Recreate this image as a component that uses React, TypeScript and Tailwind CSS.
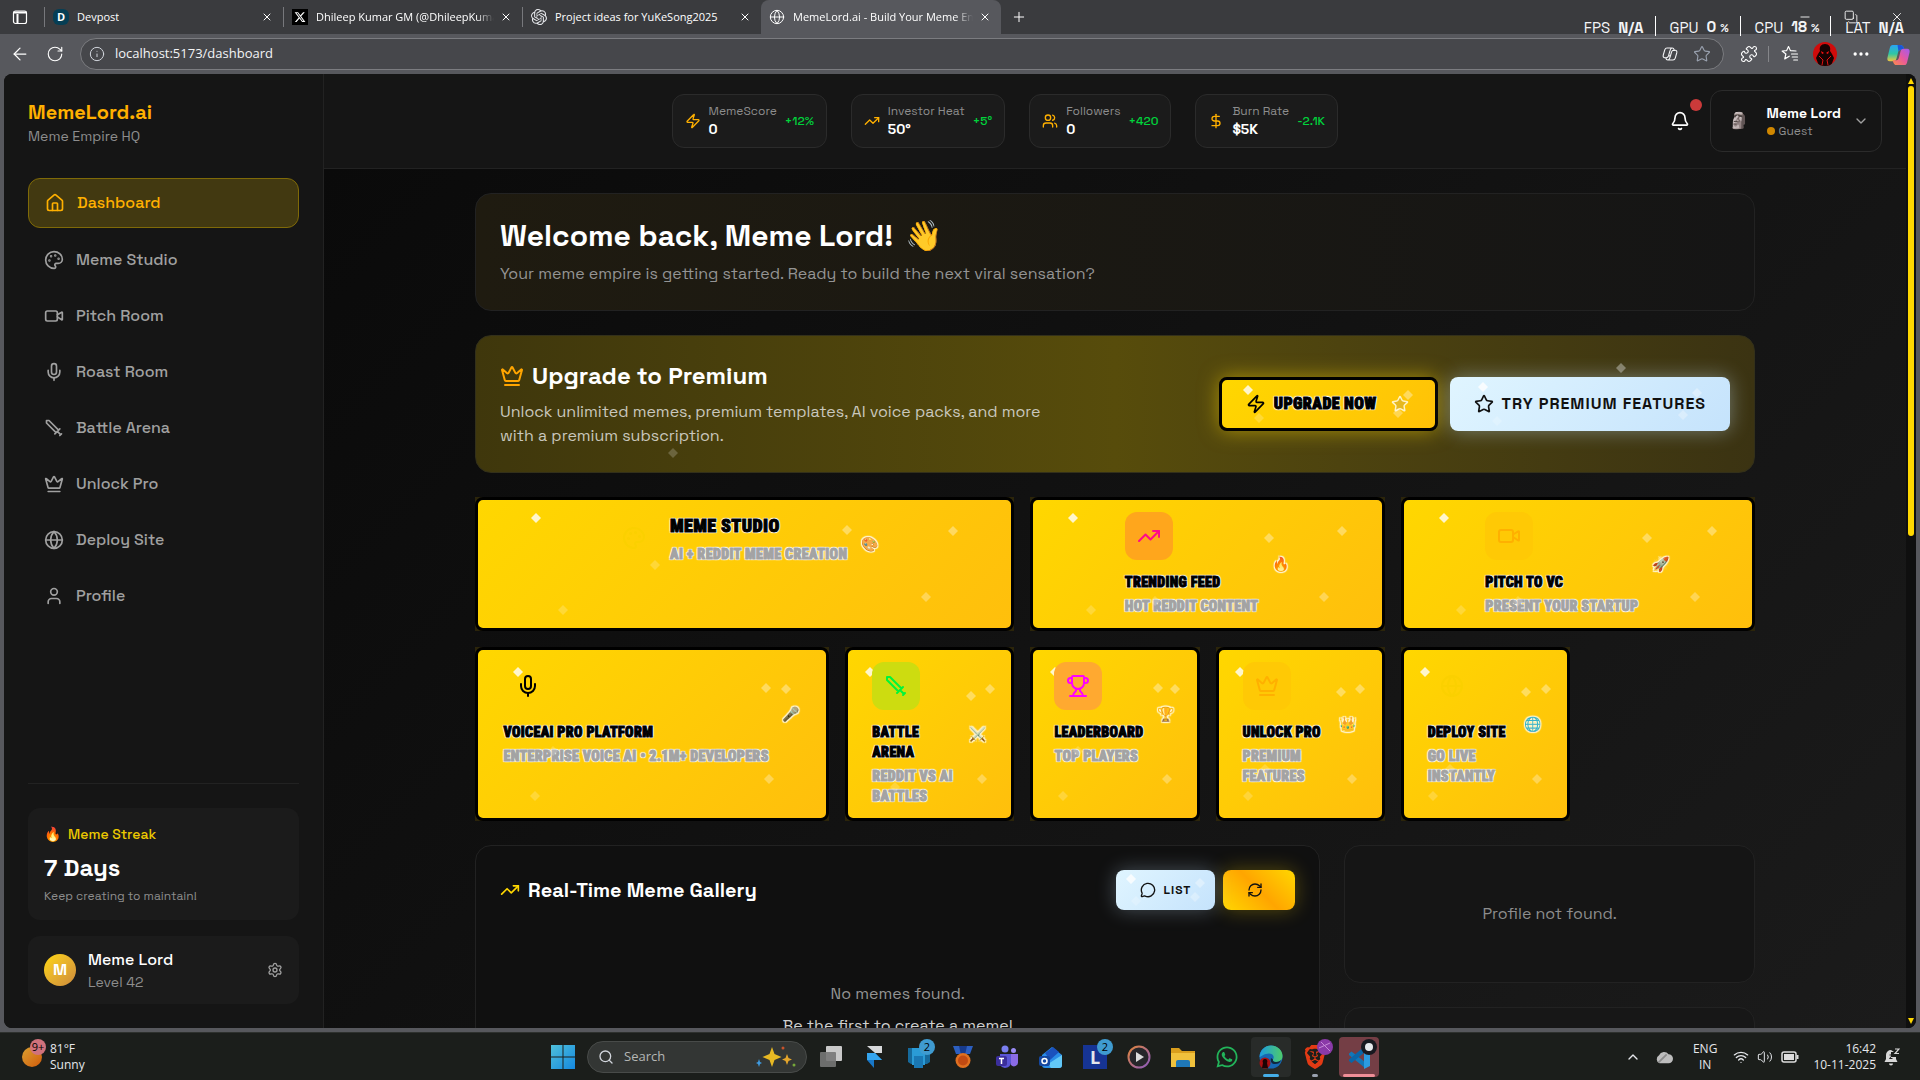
import React from "react";
import {
  House, Palette, Video, Mic, Crown, Globe, User, Zap, TrendingUp, Users, DollarSign, Bell,
  ChevronDown, ChevronUp, Settings, Star, MessageCircle, RefreshCw, Trophy, X, Plus, ArrowLeft,
  RotateCw, Info, Puzzle, Ellipsis, Search, Wifi, Volume2, Minus, Copy,
} from "lucide-react";
import { SiBrave, SiOpenai } from "react-icons/si";
import { FaWhatsapp, FaXTwitter } from "react-icons/fa6";

type IconProps = { className?: string; strokeWidth?: number };
type IconType = React.ComponentType<IconProps>;

const Sword = ({ className, strokeWidth = 2 }: IconProps) => (
  <svg viewBox="0 0 24 24" fill="none" stroke="currentColor" strokeWidth={strokeWidth} strokeLinecap="round" strokeLinejoin="round" className={className}>
    <path d="M14.5 17.5 3 6V3h3l11.5 11.5M13 19l6-6M16 16l4 4M19 21l2-2" />
  </svg>
);

const meme = "font-['Roboto_Condensed',sans-serif] font-black uppercase [-webkit-text-stroke:1px_currentColor]";
const outline = "[text-shadow:-1px_-1px_1px_#fff,1px_-1px_1px_#fff,-1px_1px_1px_#fff,1px_1px_1px_#fff,0_0_2px_#fff]";

/* ---------- Browser chrome ---------- */

const tabs = [
  { title: "Devpost", active: false },
  { title: "Dhileep Kumar GM (@DhileepKumar)", active: false },
  { title: "Project ideas for YuKeSong2025", active: false },
  { title: "MemeLord.ai - Build Your Meme Empire", active: true },
];

function TabIcon({ index }: { index: number }) {
  if (index === 0)
    return (
      <span className="flex size-4 shrink-0 items-center justify-center rounded-md bg-[#063e54] text-[11px] font-bold text-white">D</span>
    );
  if (index === 1)
    return (
      <span className="flex size-4 shrink-0 items-center justify-center bg-black text-white"><FaXTwitter className="size-3" /></span>
    );
  if (index === 2) return <SiOpenai className="size-4 shrink-0 text-gray-200" />;
  return <Globe className="size-4 shrink-0 text-white" strokeWidth={1.5} />;
}

function TabBar() {
  return (
    <div className="flex h-[34px] items-stretch bg-[#3a3b3e] text-[11px] text-white">
      <button aria-label="Tab actions" className="flex w-[44px] items-center pl-3">
        <svg viewBox="0 0 16 16" className="size-4" fill="none" stroke="#fff" strokeWidth="1.2">
          <rect x="1.5" y="2" width="13" height="12.5" rx="2" />
          <path d="M1.5 3.5h13M5.5 5v9" strokeWidth="2" />
        </svg>
      </button>
      {tabs.map((t, i) => (
        <div
          key={t.title}
          className={
            t.active
              ? "flex w-[240px] items-center rounded-t-lg bg-[#57585d] px-2"
              : "my-[7px] flex w-[239px] items-center border-l border-[#77787c] px-2"
          }
        >
          <button className="flex min-w-0 flex-1 items-center gap-2">
            <TabIcon index={i} />
            <span
              className={
                i % 2 === 1
                  ? "overflow-hidden whitespace-nowrap [mask-image:linear-gradient(to_right,#000_90%,transparent)]"
                  : "overflow-hidden whitespace-nowrap"
              }
            >
              {t.title}
            </span>
          </button>
          <button aria-label={`Close ${t.title}`} className="ml-1 shrink-0">
            <X className="size-4 p-0.5" strokeWidth={2} />
          </button>
        </div>
      ))}
      <button aria-label="New tab" className="ml-2 self-center"><Plus className="size-5 p-0.5" strokeWidth={1.5} /></button>
    </div>
  );
}

function Overlay() {
  const stats = [
    ["FPS", "N/A", ""],
    ["GPU", "0", "%"],
    ["CPU", "18", "%"],
    ["LAT", "N/A", ""],
  ];
  return (
    <>
      <div className="absolute top-[10px] right-4 flex items-center gap-8 text-white">
        <button aria-label="Minimize"><Minus className="size-3.5" strokeWidth={1.5} /></button>
        <button aria-label="Restore"><Copy className="size-3.5 -scale-x-100 rotate-90" strokeWidth={1.5} /></button>
        <button aria-label="Close window"><X className="size-3.5" strokeWidth={1.5} /></button>
      </div>
      <div className="absolute top-4 right-4 flex h-5 items-end font-['Space_Grotesk',Inter,sans-serif] text-[15px] leading-4 text-gray-100">
        {stats.map(([k, v, u]) => (
          <div key={k} className="flex h-5 items-end gap-2 border-l border-white pr-[11px] pl-3.5 first:border-l-0 last:pr-0">
            <span>{k}</span>
            <span className="font-bold">
              {v}
              {u && <span className="pl-1 text-[11px]">{u}</span>}
            </span>
          </div>
        ))}
      </div>
    </>
  );
}

function CopilotLogo({ className }: { className?: string }) {
  return (
    <svg viewBox="0 0 24 24" className={className}>
      <defs>
        <linearGradient id="cpa" x1="0" y1="0" x2="0" y2="1">
          <stop offset="0" stopColor="#2aa4f4" /><stop offset=".55" stopColor="#2fc6a4" /><stop offset="1" stopColor="#f2c53d" />
        </linearGradient>
        <linearGradient id="cpb" x1="1" y1="0" x2="0" y2="1">
          <stop offset="0" stopColor="#a35bf0" /><stop offset=".5" stopColor="#e8589e" /><stop offset="1" stopColor="#fb8a4a" />
        </linearGradient>
      </defs>
      <path d="M6 2h8c2 0 3 1.5 3.5 3L18 7h-3c-2 0-3 1-3.5 3l-1.5 6c-.5 2-1.5 3-3.5 3H3c-2.5 0-3-2-2.5-4L3 5c.5-2 1.5-3 3-3z" fill="url(#cpa)" />
      <path d="M11 2h3c2 0 3 1.5 3.5 3L18 7h-3c-1.5 0-2.5.5-3 2z" fill="#1d55d8" />
      <path d="M18 23h-8c-2 0-3-1.5-3.5-3L6 18h3c2 0 3-1 3.500-3L14 9c.5-2 1.5-3 3.5-3H21c2.5 0 3 2 2.5 4L21 20c-.5 2-1.5 3-3 3z" fill="url(#cpb)" />
    </svg>
  );
}

function Toolbar() {
  return (
    <div className="flex h-10 items-center bg-[#57585d] pr-2.5 text-white">
      <button aria-label="Back" className="ml-2.5"><ArrowLeft className="size-5" strokeWidth={1.5} /></button>
      <button aria-label="Reload" className="ml-4"><RotateCw className="size-[18px]" strokeWidth={1.5} /></button>
      <div className="ml-4 flex h-8 flex-1 items-center rounded-full border border-[#7b7c80] bg-[#46474b] px-2">
        <Info className="size-4 text-gray-300" strokeWidth={1.5} />
        <input aria-label="Address" defaultValue="localhost:5173/dashboard" className="ml-2.5 flex-1 bg-transparent text-[13px] text-gray-100 outline-none" />
        <svg viewBox="0 0 24 24" className="size-[18px] text-gray-100" fill="none" stroke="currentColor" strokeWidth="1.5" strokeLinejoin="round">
          <path d="M8 4h7c1.5 0 2.2 1 2.5 2.5l.3 1.5M8 4C6.5 4 5.5 5 5 6.5l-2 7c-.5 2 .3 3.5 2 3.5h2c1.5 0 2.5-1 3-2.5l2-7C12.5 5.5 13.5 4 15 4M16 20H9c-1.5 0-2.2-1-2.5-2.5L6.3 17M16 20c1.5 0 2.5-1 3-2.5l2-7c.5-2-.3-3.5-2-3.5h-2c-1.5 0-2.5 1-3 2.5l-2 7c-.5 2-1.5 3.5-3 3.5M10 14.5h3" />
        </svg>
        <button aria-label="Favorite" className="mr-1 ml-3.5"><Star className="size-[18px] text-gray-400" strokeWidth={1.5} /></button>
      </div>
      <button aria-label="Extensions" className="ml-4"><Puzzle className="size-[18px]" strokeWidth={1.5} /></button>
      <span className="ml-2.5 h-4 w-px bg-[#85868a]" />
      <button aria-label="Favorites" className="ml-3">
        <svg viewBox="0 0 24 24" className="size-[18px]" fill="none" stroke="currentColor" strokeWidth="1.6" strokeLinejoin="round" strokeLinecap="round">
          <path d="M11 15 5 18.500 6.500 12 1.500 8l6-.5L10 2l2.500 5.500L20 8M14 12h8M15 16h7M17 20h5" />
        </svg>
      </button>
      <button aria-label="Profile" className="ml-3.5 flex size-6 items-center justify-center overflow-hidden rounded-full bg-[#d00b0b]">
        <svg viewBox="0 0 24 24" className="size-6">
          <path d="M12 2c4 0 6 3 5 7l2 3 2 4-3 8H6l-3-8 2-4 2-3c-1-4 1-7 5-7z" fill="#160202" />
          <path d="m8 9 3 2-2 1zM16 9l-3 2 2 1z" fill="#f11" />
          <path d="M6 14l4 4-1 5M18 14l-4 4 1 5" fill="none" stroke="#d11" />
        </svg>
      </button>
      <button aria-label="More" className="ml-3.5"><Ellipsis className="size-5" strokeWidth={2} /></button>
      <button aria-label="Copilot" className="ml-4"><CopilotLogo className="size-[23px]" /></button>
    </div>
  );
}

/* ---------- Sidebar ---------- */

const nav: { label: string; icon: IconType }[] = [
  { label: "Dashboard", icon: House },
  { label: "Meme Studio", icon: Palette },
  { label: "Pitch Room", icon: Video },
  { label: "Roast Room", icon: Mic },
  { label: "Battle Arena", icon: Sword },
  { label: "Unlock Pro", icon: Crown },
  { label: "Deploy Site", icon: Globe },
  { label: "Profile", icon: User },
];

function Sidebar() {
  return (
    <aside className="flex w-80 shrink-0 flex-col border-r border-[#222] bg-[#151515] p-6">
      <div className="mb-8">
        <div className="text-xl leading-7 font-bold text-[#ffb000]">MemeLord.ai</div>
        <div className="text-sm text-[#8d8d8d]">Meme Empire HQ</div>
      </div>
      <nav className="flex flex-1 flex-col gap-2">
        {nav.map(({ label, icon: Icon }, i) => (
          <a
            key={label}
            href="#"
            className={
              i === 0
                ? "flex items-center gap-3 rounded-xl border border-[#7f6a08] bg-[#423911] px-4 py-3 font-medium text-[#ffb000]"
                : "flex items-center gap-3 rounded-xl px-4 py-3 font-medium text-[#a0a0a0]"
            }
          >
            <Icon className="size-5" strokeWidth={2} />
            {label}
          </a>
        ))}
      </nav>
      <div className="flex flex-col gap-4 border-t border-[#222] pt-6">
        <div className="rounded-xl bg-[#1b1b1b] p-4">
          <div className="mb-2 flex items-center gap-2 text-sm font-medium text-[#ecc900]">
            <span className="w-4 text-sm">🔥</span>
            Meme Streak
          </div>
          <div className="mb-1 text-2xl font-bold text-white">7 Days</div>
          <div className="text-xs text-[#8d8d8d]">Keep creating to maintain!</div>
        </div>
        <div className="flex items-center gap-3 rounded-xl bg-[#1b1b1b] px-4 py-3">
          <div className="flex size-8 items-center justify-center rounded-full bg-linear-to-br from-[#ffd700] to-[#cd8a3a] font-bold text-white">M</div>
          <div className="flex-1">
            <div className="font-medium text-white">Meme Lord</div>
            <div className="text-sm text-[#8d8d8d]">Level 42</div>
          </div>
          <button aria-label="Settings"><Settings className="size-4 text-[#a0a0a0]" strokeWidth={2} /></button>
        </div>
      </div>
    </aside>
  );
}

/* ---------- Header ---------- */

const stats: { label: string; value: string; delta: string; icon: IconType }[] = [
  { label: "MemeScore", value: "0", delta: "+12%", icon: Zap },
  { label: "Investor Heat", value: "50°", delta: "+5°", icon: TrendingUp },
  { label: "Followers", value: "0", delta: "+420", icon: Users },
  { label: "Burn Rate", value: "$5K", delta: "-2.1K", icon: DollarSign },
];

function Header() {
  return (
    <header className="flex items-center border-b border-[#222] bg-[#151515] px-6 py-4">
      <div className="flex flex-1 justify-center gap-6">
        {stats.map(({ label, value, delta, icon: Icon }) => (
          <div key={label} className="flex items-center gap-2 rounded-xl border border-[#2b2b2b] bg-[#1b1b1b] px-3 py-2">
            <Icon className="size-4 text-[#ffb000]" strokeWidth={2} />
            <div>
              <div className="text-xs text-[#8d8d8d]">{label}</div>
              <div className="text-sm font-bold text-white">{value}</div>
            </div>
            <span className="text-xs font-medium text-[#00d43b]">{delta}</span>
          </div>
        ))}
      </div>
      <div className="flex items-center gap-3">
        <button aria-label="Notifications" className="relative p-2 text-white">
          <Bell className="size-5" strokeWidth={2} />
          <span className="absolute -top-1 -right-1 size-3 rounded-full bg-[#cb3a3a]" />
        </button>
        <button className="flex items-center rounded-xl border border-[#2b2b2b] px-3 py-3 text-left">
          <span className="flex size-8 items-center justify-center text-base">🗿</span>
          <span className="ml-3 block">
            <span className="block text-sm font-bold text-white">Meme Lord</span>
            <span className="flex items-center gap-1 text-xs text-[#8d8d8d]">
              <span className="size-2 rounded-full bg-[#d08700]" />
              Guest
            </span>
          </span>
          <ChevronDown className="ml-3 size-4 text-[#a0a0a0]" strokeWidth={2} />
        </button>
      </div>
    </header>
  );
}

/* ---------- Sparkles ---------- */

function Spark({ className }: { className: string }) {
  return (
    <svg viewBox="0 0 10 10" className={className} aria-hidden="true">
      <path d="M5 0 10 5 5 10 0 5z" fill="#fff" />
    </svg>
  );
}

function SparklePair() {
  return (
    <>
      <Spark className="pointer-events-none absolute top-[20%] right-[10%] size-2.5 opacity-35" />
      <Spark className="pointer-events-none absolute bottom-[10%] left-[15%] size-2.5 opacity-20" />
    </>
  );
}

function Sparkles() {
  return (
    <>
      <Spark className="pointer-events-none absolute top-[10%] left-[10%] size-2.5 opacity-80" />
      <Spark className="pointer-events-none absolute right-[15%] bottom-[20%] size-2.5 opacity-30" />
      <SparklePair />
    </>
  );
}

/* ---------- Action cards ---------- */

type Card = { title: string; sub: string; emoji: string; icon: IconType; span: string; tint: string };

const cards: Card[] = [
  { title: "Trending Feed", sub: "Hot Reddit Content", emoji: "🔥", icon: TrendingUp, span: "col-span-2", tint: "bg-[#ffa61c] text-[#ff0a8a]" },
  { title: "Pitch to VC", sub: "Present your startup", emoji: "🚀", icon: Video, span: "col-span-2", tint: "bg-[#ffc905] text-[#ffb000]" },
  { title: "VoiceAI Pro Platform", sub: "Enterprise Voice AI • 2.1M+ Developers", emoji: "🎤", icon: Mic, span: "col-span-2", tint: "text-black" },
  { title: "Battle Arena", sub: "Reddit vs AI Battles", emoji: "⚔️", icon: Sword, span: "col-span-1", tint: "bg-[#cddc10] text-[#00f53a]" },
  { title: "Leaderboard", sub: "Top Players", emoji: "🏆", icon: Trophy, span: "col-span-1", tint: "bg-[#ffa930] text-[#ff00ff]" },
  { title: "Unlock Pro", sub: "Premium Features", emoji: "👑", icon: Crown, span: "col-span-1", tint: "bg-[#ffc905] text-[#ffb000]" },
  { title: "Deploy Site", sub: "Go Live Instantly", emoji: "🌐", icon: Globe, span: "col-span-1", tint: "text-[#fbd000]" },
];

const shell =
  "relative flex w-full items-start justify-center rounded-lg border-3 border-black bg-linear-135 from-[#ffd700] to-[#ffbf0c] px-6 py-3 text-left";

function Emoji({ children }: { children: string }) {
  return <span className={`w-5 shrink-0 text-center text-sm opacity-80 ${outline}`}>{children}</span>;
}

function ActionCards() {
  return (
    <section className="grid grid-cols-7 gap-4">
      <div className="col-span-3 flex bg-[#2c250a]">
        <button className={shell}>
          <Sparkles />
          <span className="relative flex h-16 items-center gap-3">
            <SparklePair />
            <span className="mb-3 flex items-center gap-3">
              <span className="flex size-12 items-center justify-center text-[#fbd000]"><Palette className="size-6" strokeWidth={2} /></span>
              <span className={`${meme} ${outline} tracking-wide`}>
                <span className="block text-lg leading-7 text-black">Meme Studio</span>
                <span className="mt-1 block text-sm leading-5 text-[#a3a3a3]">AI + Reddit meme creation</span>
              </span>
            </span>
            <Emoji>🎨</Emoji>
          </span>
        </button>
      </div>
      {cards.map(({ title, sub, emoji, icon: Icon, span, tint }) => (
        <div key={title} className={`${span} flex bg-[#2c250a]`}>
          <button className={shell}>
            <Sparkles />
            <span className="relative flex items-center gap-3">
              <SparklePair />
              <span>
                <span className={`flex size-12 items-center justify-center rounded-xl ${tint}`}><Icon className="size-6" strokeWidth={2} /></span>
                <span className={`${meme} ${outline} block text-sm tracking-wide`}>
                  <span className="mt-3 block text-black">{title}</span>
                  <span className="mt-1 block text-[#a3a3a3]">{sub}</span>
                </span>
              </span>
              <Emoji>{emoji}</Emoji>
            </span>
          </button>
        </div>
      ))}
    </section>
  );
}

/* ---------- Main ---------- */

function Main() {
  return (
    <main className="min-h-0 flex-1 overflow-hidden bg-linear-135 from-[#0a0a0a] to-[#1b1b1b] p-6">
      <div className="mx-auto flex max-w-7xl flex-col gap-6">
        <section className="rounded-2xl border border-[#222] bg-linear-to-r from-[#1f1b10] to-[#151515] p-6">
          <h1 className="mb-2 flex items-center gap-3 text-3xl font-bold text-white">
            Welcome back, Meme Lord! <span>👋</span>
          </h1>
          <p className="text-base text-[#949494]">Your meme empire is getting started. Ready to build the next viral sensation?</p>
        </section>

        <section className="relative flex items-center justify-between rounded-2xl border border-[#33301a] bg-linear-to-r from-[#3f370c] via-[#574c0b] to-[#3b3312] p-6">
          <SparklePair />
          <div className="max-w-xl">
            <h2 className="mb-2 flex items-center gap-2 text-2xl font-bold text-white">
              <Crown className="size-6 text-[#ffa500]" strokeWidth={2} />
              Upgrade to Premium
            </h2>
            <p className="text-base text-[#c9c7bd]">Unlock unlimited memes, premium templates, AI voice packs, and more with a premium subscription.</p>
          </div>
          <div className="flex gap-3">
            <button className="relative flex h-[54px] items-center rounded-lg border-3 border-black bg-linear-135 from-[#ffd700] to-[#ffc107] px-6 text-black shadow-[0_0_20px_rgba(255,215,0,0.5)]">
              <Sparkles />
              <Zap className="mr-2 size-5" strokeWidth={2} />
              <span className={`${meme} ${outline} text-base tracking-wide`}>Upgrade Now</span>
              <Star className="mr-0.5 ml-3.5 size-[18px] fill-[#e6b820] text-[#fff3c4]" strokeWidth={2} />
            </button>
            <button className="relative flex h-[54px] items-center gap-2 rounded-lg bg-linear-135 from-[#e0f5ff] to-[#c5e3fc] px-6 text-base font-semibold tracking-[1px] text-[#111] uppercase shadow-[0_0_20px_rgba(200,230,255,0.4)]">
              <Sparkles />
              <Star className="size-5" strokeWidth={2} />
              Try Premium Features
            </button>
          </div>
        </section>

        <ActionCards />

        <div className="grid grid-cols-3 items-start gap-6">
          <section className="col-span-2 min-h-96 rounded-2xl border border-[#222] bg-[#101010] p-6">
            <div className="flex items-center justify-between">
              <h2 className="flex items-center gap-2 text-xl font-bold text-white">
                <TrendingUp className="size-5 text-[#ffd700]" strokeWidth={2} />
                Real-Time Meme Gallery
              </h2>
              <div className="flex gap-2">
                <button className="relative flex h-10 items-center gap-2 rounded-lg bg-linear-135 from-[#e0f5ff] to-[#c5e3fc] px-6 text-xs font-semibold tracking-[1px] text-[#111] uppercase shadow-[0_0_20px_rgba(200,230,255,0.3)]">
                  <Sparkles />
                  <MessageCircle className="size-4" strokeWidth={2} />
                  List
                </button>
                <button aria-label="Refresh" className="flex h-10 items-center rounded-lg bg-linear-45 from-[#ffd700] via-[#ffa500] to-[#ffd700] pr-8 pl-6 text-[#111] shadow-[0_0_20px_rgba(255,215,0,0.3)]">
                  <RefreshCw className="size-4" strokeWidth={2} />
                </button>
              </div>
            </div>
            <div className="mt-[72px] text-center text-base">
              <p className="text-[#949494]">No memes found.</p>
              <p className="mt-2 text-[#d0d0d0]">Be the first to create a meme!</p>
            </div>
          </section>
          <div className="flex flex-col gap-6">
            <section className="flex h-[138px] items-center justify-center rounded-2xl border border-[#222] bg-[#151515] text-base text-[#8d8d8d]">Profile not found.</section>
            <section className="h-[138px] rounded-2xl border border-[#222] bg-[#171717]" />
          </div>
        </div>
      </div>
    </main>
  );
}

/* ---------- Taskbar ---------- */

function Badge({ children, className }: { children: React.ReactNode; className: string }) {
  return <span className={`absolute flex size-4 items-center justify-center rounded-full text-[11px] leading-none text-black ${className}`}>{children}</span>;
}

const slot = "relative flex size-10 shrink-0 items-center justify-center rounded";

function TaskIcons() {
  return (
    <div className="flex items-center gap-1">
      <button aria-label="Task view" className={slot}>
        <svg viewBox="0 0 24 24" className="size-6"><rect x="7" y="1" width="16" height="15" rx="1" fill="#c9c9c9" /><rect x="1" y="7" width="16" height="15" rx="1" fill="#777" fillOpacity=".9" /></svg>
      </button>
      <button aria-label="Design tool" className={slot}>
        <svg viewBox="0 0 24 24" className="size-6"><path d="M4 1h15v7H12z" fill="#d7d9db" /><path d="M4 8h8l7 7h-8v8l-7-8z" fill="#1878c8" /><path d="M4 8h8l7 7H4z" fill="#35a5ee" /></svg>
      </button>
      <button aria-label="Devices, 2 notifications" className={slot}>
        <svg viewBox="0 0 24 24" className="size-6"><path d="M1 3h22v14l-3 2H4l-3-2z" fill="#166a9c" /><path d="M5 3h13v17H5z" fill="#2a9bd6" /><path d="M7 11h9v12H7z" fill="#1a78b4" /></svg>
        <Badge className="top-0.5 right-1 bg-[#3f9bd0]">2</Badge>
      </button>
      <button aria-label="Rewards" className={slot}>
        <svg viewBox="0 0 24 24" className="size-6"><path d="M2 1h20l-3 8H5z" fill="#2c5fc0" /><path d="M8 1h8l-2 9h-4z" fill="#173a8b" /><circle cx="12" cy="15.5" r="7.5" fill="#e07020" /><circle cx="12" cy="15.5" r="5" fill="#c24a12" /></svg>
      </button>
      <button aria-label="Teams" className={slot}>
        <svg viewBox="0 0 24 24" className="size-6"><circle cx="10" cy="4" r="3.5" fill="#7a7ff0" /><circle cx="18.5" cy="5.5" r="2.5" fill="#9a8cf5" /><path d="M5 9h11v9a6 6 0 0 1-11 2z" fill="#5a55d6" /><path d="M16 9h7v8a4 4 0 0 1-7 3z" fill="#8a6be6" /><rect x="1" y="11" width="11" height="10" rx="2" fill="#3b2f9c" /><path d="M4 13.5h5M6.5 13.5V19" stroke="#fff" strokeWidth="1.5" /></svg>
      </button>
      <button aria-label="Outlook" className={slot}>
        <svg viewBox="0 0 24 24" className="size-6"><path d="M3 10 13 2l10 8v10a3 3 0 0 1-3 3H6a3 3 0 0 1-3-3z" fill="#2a8ee8" /><path d="m6 8 8-6 6 5-9 8z" fill="#1b52bd" /><path d="m23 10-14 9 3 4h8a3 3 0 0 0 3-3z" fill="#62c8f7" /><rect x="0" y="11" width="11" height="10" rx="2" fill="#1447a0" /><circle cx="5.5" cy="16" r="2.5" fill="none" stroke="#fff" strokeWidth="1.5" /></svg>
      </button>
      <button aria-label="L app, 2 notifications" className={slot}>
        <span className="flex size-6 items-center justify-center bg-[#163494] text-lg font-bold text-gray-200">L</span>
        <Badge className="top-0.5 right-0.5 bg-[#3f9bd0]">2</Badge>
      </button>
      <button aria-label="Media player" className={slot}>
        <svg viewBox="0 0 24 24" className="size-6"><defs><linearGradient id="mp" x1="0" y1="0" x2="1" y2="1"><stop offset="0" stopColor="#e0843c" /><stop offset="1" stopColor="#8a5ac0" /></linearGradient></defs><circle cx="12" cy="12" r="10.5" fill="#26262a" stroke="url(#mp)" strokeWidth="2" /><path d="m9 7 8 5-8 5z" fill="#dcdcdc" /></svg>
      </button>
      <button aria-label="File explorer" className={slot}>
        <svg viewBox="0 0 24 24" className="size-6"><path d="M0 3h8l3 3h13v16H0z" fill="#d99e1d" /><path d="M0 8h24v14H0z" fill="#f0c13c" /><path d="M5 22v-5a2 2 0 0 1 2-2h10a2 2 0 0 1 2 2v5z" fill="#1f78b8" /></svg>
      </button>
      <button aria-label="WhatsApp" className={slot}><FaWhatsapp className="size-6 text-[#22b45a]" /></button>
      <button aria-label="Edge" className={`${slot} bg-[#282b29]`}>
        <svg viewBox="0 0 24 24" className="size-6"><defs><linearGradient id="ed" x1="0" y1="0" x2="1" y2="0"><stop offset="0" stopColor="#1c9be0" /><stop offset="1" stopColor="#4ecb6a" /></linearGradient></defs><circle cx="12" cy="12" r="11.5" fill="#1668b4" /><path d="M.5 12C1 5 6 .5 12 .5S23.5 5 23.5 11c0 4-3 6-6.500 6-2.500 0-3.500-1-3-2.500 2-3-.5-6-4-6-5 0-9 4-9.500 3.500z" fill="url(#ed)" /><path d="M14 14.500c-.5 1.500.5 2.500 3 2.500 2 0 4-1 5-2-1 3-3 4-6 4s-5-2-4-6z" fill="#10283c" /><circle cx="6" cy="18" r="5.5" fill="#a80f12" /><path d="M6 14c2 0 3 2 2 4l1 5H3l1-5c-1-2 0-4 2-4z" fill="#1b0304" /></svg>
        <span className="absolute bottom-0 h-[3px] w-4 rounded-full bg-[#45aee8]" />
      </button>
      <button aria-label="Brave" className={slot}>
        <SiBrave className="size-6 text-[#e23a14]" />
        <Badge className="top-0.5 right-0.5 bg-[#8a3aa8]">
          <svg viewBox="0 0 16 16" className="size-4" fill="none" stroke="#c78bd8"><path d="M2 9 13 4M4 3l9 9" /></svg>
        </Badge>
        <span className="absolute bottom-0 h-[3px] w-1.5 rounded-full bg-gray-400" />
      </button>
      <button aria-label="VS Code" className={`${slot} bg-[#743e45]`}>
        <svg viewBox="0 0 24 24" className="size-6"><path d="M2 8.500 4.500 6.500 18 17v6L2 10z" fill="#1277b8" /><path d="M2 16 4.500 18 18 7V1L2 14.500z" fill="#0a66a8" /><path d="m17 1 6 3v17l-6 3z" fill="#2c9be0" /></svg>
        <Badge className="top-0.5 right-0.5 bg-[#17181f]"><span className="size-2 rounded-full bg-gray-200" /></Badge>
        <span className="absolute bottom-0 h-[3px] w-8 rounded-full bg-[#ef8e97]" />
      </button>
    </div>
  );
}

function Taskbar() {
  return (
    <footer className="flex h-12 shrink-0 items-center border-t border-[#2e312e] bg-[#1b1e1b] text-xs text-gray-200">
      <div className="flex flex-1 items-center pl-5">
        <button className="flex items-center gap-1.5 text-left">
          <span className="relative size-6">
            <span className="absolute bottom-0.5 left-0.5 size-5 rounded-full bg-linear-to-br from-[#d9a030] to-[#d05a08]" />
            <Badge className="-top-1.5 -right-0.5 bg-[#d0727c]">9+</Badge>
          </span>
          <span className="leading-4">81°F<br />Sunny</span>
        </button>
      </div>
      <div className="flex items-center pl-2.5">
        <button aria-label="Start" className="mr-3">
          <svg viewBox="0 0 24 24" className="size-6">
            <defs><linearGradient id="st" x1="0" y1="0" x2="1" y2="1"><stop offset="0" stopColor="#4fc0da" /><stop offset="1" stopColor="#1488e0" /></linearGradient></defs>
            <path d="M0 0h11.5v11.5H0zM12.5 0H24v11.5H12.5zM0 12.5h11.5V24H0zM12.5 12.5H24V24H12.5z" fill="url(#st)" />
          </svg>
        </button>
        <label className="mr-1 flex h-8 w-[220px] items-center gap-2.5 rounded-full border border-[#484b49] bg-[#333634] px-2.5">
          <Search className="size-4 shrink-0 text-gray-300" strokeWidth={2} />
          <input aria-label="Search" placeholder="Search" className="w-24 flex-1 bg-transparent text-[13px] outline-none placeholder:text-[#b4b6b4]" />
          <svg viewBox="0 0 40 24" className="h-6 w-10 shrink-0">
            <path d="m16 2 2.500 7 7 3-7 3-2.500 7-2.500-7-7-3 7-3z" fill="#e8b923" />
            <path d="m31 9 1.500 4 3.500 1.500-3.500 1.500-1.500 4-1.500-4-3.500-1.500 3.500-1.500z" fill="#e3a52c" />
            <path d="m3 14 1 3 2 1-2 1-1 3-1-3-2-1 2-1z" fill="#3f9be0" />
            <circle cx="27" cy="3" r="1.5" fill="#c9532b" /><circle cx="38" cy="20" r="1.5" fill="#76a83a" />
          </svg>
        </label>
        <TaskIcons />
      </div>
      <div className="flex flex-1 items-center justify-end pr-5">
        <button aria-label="Show hidden icons"><ChevronUp className="size-4" strokeWidth={2} /></button>
        <svg viewBox="0 0 20 16" className="mr-5 ml-3.5 h-4 w-[18px]"><path d="M5 15a5 5 0 0 1-.5-9A6 6 0 0 1 15 5a5 5 0 0 1 0 10z" fill="#bdbdbd" /><path d="m4 14 9-9" stroke="#8a8a8a" strokeWidth="2" /></svg>
        <span className="text-center leading-4">ENG<br />IN</span>
        <button className="mr-3.5 ml-4 flex items-center gap-2" aria-label="Network, sound and battery">
          <Wifi className="size-4" strokeWidth={2} />
          <Volume2 className="size-4" strokeWidth={1.5} />
          <svg viewBox="0 0 18 12" className="h-3 w-[18px]"><rect x="1" y="1" width="14" height="10" rx="2" fill="none" stroke="#ddd" strokeWidth="1.5" /><rect x="3" y="3" width="10" height="6" fill="#ddd" /><path d="M16.5 4v4" stroke="#ddd" strokeWidth="2" /></svg>
        </button>
        <span className="text-right leading-4">16:42<br />10-11-2025</span>
        <button aria-label="Notifications, do not disturb" className="ml-2">
          <svg viewBox="0 0 16 18" className="h-[18px] w-4"><path d="M7 2a5 5 0 0 0-5 5v4l-1.500 3h13L12 11V9H7V4h3z" fill="#d8d8d8" /><path d="M5 15.500h4a2 2 0 0 1-4 0z" fill="#d8d8d8" /><path d="M11 1h4l-4 4.500h4" fill="none" stroke="#d8d8d8" strokeWidth="1.2" /><path d="M5.500 7h3l-3 3.500h3" fill="none" stroke="#222" strokeWidth="1" /></svg>
        </button>
      </div>
    </footer>
  );
}

export default function App() {
  return (
    <div className="relative flex h-screen flex-col overflow-hidden bg-[#57585d] font-['Open_Sans',sans-serif]">
      <TabBar />
      <Overlay />
      <Toolbar />
      <div className="mx-1 mb-1 flex min-h-0 flex-1 overflow-hidden rounded-lg bg-[#0f0f0f] font-['Space_Grotesk',Inter,sans-serif]">
        <Sidebar />
        <div className="flex min-w-0 flex-1 flex-col">
          <Header />
          <Main />
        </div>
        <div className="flex w-2.5 shrink-0 flex-col items-center bg-[#0f0f0f] py-1">
          <svg viewBox="0 0 6 6" className="size-1.5"><path d="m3 0 3 6H0z" fill="#ffd700" /></svg>
          <div className="mt-0.5 h-[450px] w-1.5 rounded-full bg-[#ffd700]" />
          <svg viewBox="0 0 6 6" className="mt-auto size-1.5"><path d="m3 6 3-6H0z" fill="#ffd700" /></svg>
        </div>
      </div>
      <Taskbar />
    </div>
  );
}
